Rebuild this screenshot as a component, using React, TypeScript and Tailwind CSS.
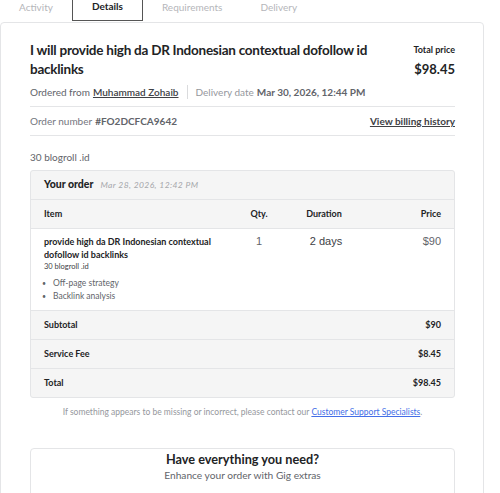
const tabs = ['Activity', 'Details', 'Requirements', 'Delivery'];

const rows = [
  { label: 'Subtotal', value: '$90' },
  { label: 'Service Fee', value: '$8.45' },
  { label: 'Total', value: '$98.45' },
];

export default function App() {
  return (
    <div className="w-[500px] bg-white font-['Lato',sans-serif] text-[#222325]">
      {/* Tabs */}
      <div className="flex h-[21px] text-[10px]">
        {tabs.map((t) => (
          <div
            key={t}
            className={`flex items-center px-[19px] pb-[7px] ${
              t === 'Details'
                ? 'border-x border-b border-[#555] font-bold text-[#222325]'
                : 'text-[#b5b6ba]'
            }`}
          >
            {t}
          </div>
        ))}
      </div>

      {/* Card */}
      <div className="mt-[1px] w-[484px] rounded-[4px] border border-[#e4e5e7] pl-[29px] pr-[28px] pt-[18px] pb-[40px]">
        <div className="flex justify-between">
          <h1 className="max-w-[345px] text-[13.5px] font-bold leading-[19px] tracking-[-0.25px]">
            I will provide high da DR Indonesian contextual dofollow id backlinks
          </h1>
          <div className="text-right">
            <div className="mt-[2px] text-[9px] font-bold leading-[14px]">Total price</div>
            <div className="mt-[2px] text-[13px] font-bold leading-[20px]">$98.45</div>
          </div>
        </div>

        <div className="mt-[5px] flex h-[16px] items-center text-[10px]">
          <span className="text-[#62646a]">Ordered from</span>
          <span className="ml-[3px] underline font-semibold text-[#404145]">Muhammad Zohaib</span>
          <span className="mx-[8px] h-[14px] w-px bg-[#dadbdd]" />
          <span className="text-[#95979d]">Delivery date</span>
          <span className="ml-[3px] font-bold text-[#62646a]">Mar 30, 2026, 12:44 PM</span>
        </div>

        <div className="mt-[6px] flex h-[30px] items-center justify-between border-y border-[#e4e5e7] text-[10px]">
          <div>
            <span className="text-[#74767e]">Order number</span>
            <span className="ml-[3px] font-bold text-[#62646a]">#FO2DCFCA9642</span>
          </div>
          <span className="font-bold text-[#404145] underline">View billing history</span>
        </div>

        <div className="mt-[13px] text-[10px] leading-[16px] text-[#62646a]">30 blogroll .id</div>

        {/* Order box */}
        <div className="mt-[5px] overflow-hidden rounded-[3px] border border-[#e4e5e7] bg-[#f5f5f5]">
          <div className="flex h-[29px] items-center gap-[7px] border-b border-[#e4e5e7] px-[13px]">
            <span className="text-[10.5px] font-black">Your order</span>
            <span className="text-[8.5px] italic tracking-[0.4px] text-[#a5a7ab]">Mar 28, 2026, 12:42 PM</span>
          </div>
          <div className="grid h-[29px] grid-cols-[190px_50px_80px_1fr] items-center border-b border-[#e4e5e7] px-[13px] text-[9px] font-bold">
            <span>Item</span>
            <span className="text-center">Qty.</span>
            <span className="text-center">Duration</span>
            <span className="text-right">Price</span>
          </div>
          <div className="grid grid-cols-[190px_50px_80px_1fr] bg-white px-[13px] pt-[6px] pb-[7px]">
            <div>
              <div className="text-[9px] font-bold leading-[13px]">
                provide high da DR Indonesian contextual dofollow id backlinks
              </div>
              <div className="text-[7.5px] leading-[12px] text-[#404145]">30 blogroll .id</div>
              <ul className="mt-[4px] -ml-[2px] text-[8.5px] leading-[13px] text-[#62646a]">
                <li className="flex gap-[7px]"><span className="text-[7px]">•</span>Off-page strategy</li>
                <li className="flex gap-[7px]"><span className="text-[7px]">•</span>Backlink analysis</li>
              </ul>
            </div>
            <span className="text-center font-['Liberation_Sans',sans-serif] text-[11px] leading-[13px] text-[#62646a]">1</span>
            <span className="pl-[4px] text-center font-['Liberation_Sans',sans-serif] text-[11px] leading-[13px] text-[#404145]">2 days</span>
            <span className="text-right font-['Liberation_Sans',sans-serif] text-[11px] leading-[13px] text-[#62646a]">$90</span>
          </div>
          {rows.map((r) => (
            <div
              key={r.label}
              className="flex h-[29px] items-center justify-between border-t border-[#e4e5e7] px-[13px] text-[9px] font-bold"
            >
              <span>{r.label}</span>
              <span>{r.value}</span>
            </div>
          ))}
        </div>

        <p className="mt-[8px] text-center text-[8.5px] leading-[12px] text-[#95979d]">
          If something appears to be missing or incorrect, please contact our{' '}
          <span className="text-[#446ee7] underline">Customer Support Specialists</span>.
        </p>

        {/* Extras */}
        <div className="mt-[30px] rounded-[4px] border border-[#e4e5e7]">
          <div className="border-b border-[#e4e5e7] pt-[2px] pb-[13px] text-center">
            <div className="text-[12.7px] font-bold leading-[17px]">Have everything you need?</div>
            <div className="text-[10.2px] leading-[14px] text-[#62646a]">Enhance your order with Gig extras</div>
          </div>
          <div className="h-[60px]" />
        </div>
      </div>
    </div>
  );
}
